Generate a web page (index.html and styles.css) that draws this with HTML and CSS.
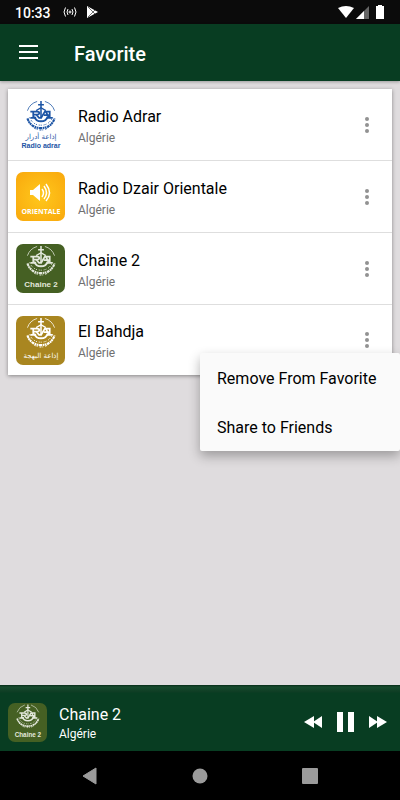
FILE: index.html
```
<!DOCTYPE html>
<html lang="en">
<head>
  <meta charset="UTF-8">
  <meta name="viewport" content="width=device-width, initial-scale=1.0">
  <title>Favorite</title>
  <link rel="stylesheet" href="styles.css">
</head>
<body class="app">

<svg class="sprite" aria-hidden="true">
  <symbol id="emblem" viewBox="0 0 34 32">
    <g fill="none" stroke="currentColor">
      <path d="M3 11A15 15 0 0 1 13 1.500" stroke-width=".8"/>
      <path d="M21 1.500A15 15 0 0 1 31 11" stroke-width=".8"/>
      <path d="M17 1V18M14 5H20" stroke-width="1.600"/>
      <path d="M10 17C11 20 13 22 17 22C21 22 23 20 24 17" stroke-width="2"/>
      <path d="M12 11L17 8L22 11" stroke-width="1.400"/>
      <path d="M6 12H13C16 12 16 15 13 15H9M9 12V18M6 18.500H12M12 15L15 18.500H18M17 18.500L21 12H26V18.500M20 15.500H26M23 18.500H29M22 12L25 18" stroke-width="1.800"/>
      <path d="M3 19C5 25 10 29 17 29C24 29 29 25 31 19" stroke-width="2.200" stroke-dasharray="3 .6 1.500 .5 2 .6"/>
      <path d="M4 22C7 28 12 31 17 31C22 31 27 28 30 22" stroke-width="1" stroke-dasharray="1 2 2 1"/>
      <path d="M5 18C8 24 12 26 17 26C22 26 26 24 29 18" stroke-width="1" stroke-dasharray="1 2 1 1"/>
    </g>
  </symbol>
  <symbol id="dots" viewBox="0 0 4 16">
    <circle cx="2" cy="2" r="2"/><circle cx="2" cy="8" r="2"/><circle cx="2" cy="14" r="2"/>
  </symbol>
  <symbol id="forward" viewBox="0 0 18 14">
    <path d="M0 1L9 7L0 13ZM8 1L18 7L8 13Z"/>
  </symbol>
</svg>

<div class="status">
  <span class="status-time">10:33</span>
  <svg class="status-cast" width="14" height="10" viewBox="0 0 14 10" fill="none" stroke="#fff">
    <circle cx="7" cy="5" r="1"/>
    <path d="M5 2Q3 5 5 8M9 2Q11 5 9 8M2.500 .5Q-.5 5 2.500 9.500M11.500 .5Q14.500 5 11.500 9.500"/>
  </svg>
  <svg class="status-play" width="13" height="12" viewBox="0 0 13 12">
    <path d="M1 0L12 6L1 12Z" fill="#fff"/>
    <path d="M2 1L9 8M2 11L9 4" stroke="#0b0b0b" stroke-width=".6"/>
  </svg>
  <svg class="status-right" width="47" height="14" viewBox="0 0 47 14" fill="#fff">
    <path d="M0 3Q8 -1 16 3L8 13Z"/>
    <path d="M18 14L31 1V14Z" fill="#666"/>
    <path d="M18 14L26 6V14Z"/>
    <path d="M38 1H40V0H44V1H46V14H38Z"/>
  </svg>
</div>

<header class="toolbar">
  <button class="icon-btn" type="button" aria-label="Menu">
    <svg width="19" height="14" viewBox="0 0 19 14" fill="#fff">
      <path d="M0 0H19V2H0ZM0 6H19V8H0ZM0 12H19V14H0Z"/>
    </svg>
  </button>
  <h1 class="toolbar-title">Favorite</h1>
</header>

<main class="content">
  <ul class="stations">
    <li class="station">
      <svg class="cover cover-blue" viewBox="0 0 49 49">
        <use href="#emblem" x="8" y="0" width="34" height="31"/>
        <text class="cover-arabic" x="25" y="39">إذاعة أدرار</text>
        <text class="cover-name" x="25" y="48">Radio adrar</text>
      </svg>
      <div class="station-text">
        <h2 class="station-name">Radio Adrar</h2>
        <p class="station-country">Algérie</p>
      </div>
      <button class="icon-btn more" type="button" aria-label="Options"><svg width="4" height="16"><use href="#dots"/></svg></button>
    </li>
    <li class="station">
      <svg class="cover cover-yellow" viewBox="0 0 49 49">
        <path d="M14 18H17L24 12V29L17 23H14Z"/>
        <path d="M26 17Q29 21 26 25M28 14Q33 21 28 27M30 12Q37 21 30 29" fill="none" stroke="#fff" stroke-width="1.500"/>
        <text class="cover-orientale" x="25" y="42">ORIENTALE</text>
      </svg>
      <div class="station-text">
        <h2 class="station-name">Radio Dzair Orientale</h2>
        <p class="station-country">Algérie</p>
      </div>
      <button class="icon-btn more" type="button" aria-label="Options"><svg width="4" height="16"><use href="#dots"/></svg></button>
    </li>
    <li class="station">
      <svg class="cover cover-green" viewBox="0 0 49 49">
        <use href="#emblem" x="8" y="1" width="34" height="31"/>
        <text class="cover-label" x="25" y="43">Chaine 2</text>
      </svg>
      <div class="station-text">
        <h2 class="station-name">Chaine 2</h2>
        <p class="station-country">Algérie</p>
      </div>
      <button class="icon-btn more" type="button" aria-label="Options"><svg width="4" height="16"><use href="#dots"/></svg></button>
    </li>
    <li class="station">
      <svg class="cover cover-gold" viewBox="0 0 49 49">
        <use href="#emblem" x="8" y="1" width="34" height="31"/>
        <text class="cover-arabic" x="25" y="42">إذاعة البهجة</text>
      </svg>
      <div class="station-text">
        <h2 class="station-name">El Bahdja</h2>
        <p class="station-country">Algérie</p>
      </div>
      <button class="icon-btn more" type="button" aria-label="Options"><svg width="4" height="16"><use href="#dots"/></svg></button>
      <div class="menu">
        <button class="menu-item" type="button">Remove From Favorite</button>
        <button class="menu-item" type="button">Share to Friends</button>
      </div>
    </li>
  </ul>
</main>

<footer class="player">
  <svg class="cover cover-green cover-small" viewBox="0 0 49 49">
    <use href="#emblem" x="8" y="1" width="34" height="31"/>
    <text class="cover-label" x="25" y="43">Chaine 2</text>
  </svg>
  <div class="player-text">
    <p class="player-name">Chaine 2</p>
    <p class="player-country">Algérie</p>
  </div>
  <div class="controls">
    <button class="icon-btn" type="button" aria-label="Previous"><svg class="flip" width="18" height="14"><use href="#forward"/></svg></button>
    <button class="icon-btn" type="button" aria-label="Pause">
      <svg width="17" height="20" viewBox="0 0 17 20"><path d="M0 0H6V20H0ZM11 0H17V20H11Z"/></svg>
    </button>
    <button class="icon-btn" type="button" aria-label="Next"><svg width="18" height="14"><use href="#forward"/></svg></button>
  </div>
</footer>

<nav class="navbar">
  <button class="icon-btn" type="button" aria-label="Back">
    <svg width="16" height="18" viewBox="0 0 16 18"><path d="M14 1V17L1 9Z" stroke="#9b9b9b" stroke-linejoin="round"/></svg>
  </button>
  <button class="icon-btn" type="button" aria-label="Home">
    <svg width="16" height="16" viewBox="0 0 16 16"><circle cx="8" cy="8" r="7.500"/></svg>
  </button>
  <button class="icon-btn" type="button" aria-label="Recent apps">
    <svg width="16" height="16" viewBox="0 0 16 16"><rect width="16" height="16" rx="1"/></svg>
  </button>
</nav>

</body>
</html>
```
FILE: styles.css
```
/* base */
* {
  box-sizing: border-box;
}

.app {
  display: flex;
  flex-direction: column;
  min-height: 100vh;
  margin: 0;
  font-family: Roboto, sans-serif;
  background: #dfdcde;
  color: #000;
}

.sprite {
  position: absolute;
  width: 0;
  height: 0;
}

h1, h2, p {
  margin: 0;
}

.icon-btn {
  display: grid;
  place-items: center;
  padding: 0;
  border: 0;
  background: none;
}

/* status bar */
.status {
  display: flex;
  align-items: center;
  height: 24px;
  padding: 0 15px;
  background: #0b0b0b;
  color: #fff;
}

.status-time {
  padding-top: 2px;
  font-size: 14px;
  font-weight: 500;
}

.status-cast {
  margin-left: 12px;
}

.status-play {
  margin-left: 9px;
}

.status-right {
  margin-left: auto;
}

/* toolbar */
.toolbar {
  display: flex;
  align-items: center;
  gap: 36px;
  height: 57px;
  padding: 3px 19px 0 19px;
  background: #083d22;
  color: #fff;
  box-shadow: 0 1px 3px rgba(0, 0, 0, .3);
}

.toolbar .icon-btn {
  width: 19px;
  height: 32px;
  padding-bottom: 4px;
}

.toolbar-title {
  font-size: 20px;
  font-weight: 500;
}

/* list */
.content {
  flex: 1;
  padding: 8px;
}

.stations {
  margin: 0;
  padding: 0;
  list-style: none;
  background: #fff;
  box-shadow: 0 1px 4px rgba(0, 0, 0, .4);
}

.station {
  position: relative;
  display: flex;
  align-items: center;
  gap: 13px;
  height: 72px;
  padding: 0 8px;
  border-bottom: 1px solid #dedede;
}

.station:last-child {
  height: 70px;
  border-bottom: 0;
}

.station-text {
  flex: 1;
  padding-top: 4px;
}

.station-name {
  font-size: 16px;
  line-height: 22px;
  font-weight: 400;
}

.station-country {
  font-size: 12px;
  line-height: 20px;
  color: #707070;
}

.more {
  width: 34px;
  height: 40px;
  fill: #929292;
}

/* covers */
.cover {
  flex: none;
  width: 49px;
  height: 49px;
  border-radius: 7px;
  color: #fff;
  fill: currentColor;
  text-anchor: middle;
}

.cover-blue {
  color: #1d55a5;
}

.cover-yellow {
  background: radial-gradient(#ffc81c, #f9a80d);
}

.cover-green {
  background: #456023;
  color: #e3e8dc;
}

.cover-gold {
  background: #a98620;
}

.cover-small {
  width: 39px;
  height: 39px;
}

.cover-name {
  font: bold 7px "Liberation Sans", sans-serif;
}

.cover-label {
  font: bold 8px "Liberation Sans", sans-serif;
}

.cover-arabic {
  font: 7px "DejaVu Sans", sans-serif;
}

.cover-orientale {
  font: bold 7px "Open Sans", sans-serif;
}

/* popup menu */
.menu {
  position: absolute;
  z-index: 1;
  top: 48px;
  right: -8px;
  width: 200px;
  border-radius: 2px;
  background: #fafafa;
  box-shadow: 0 5px 12px rgba(0, 0, 0, .3);
}

.menu-item {
  display: block;
  width: 100%;
  height: 49px;
  padding: 2px 17px 0;
  border: 0;
  background: none;
  color: #000;
  font: 16px Roboto, sans-serif;
  text-align: left;
  white-space: nowrap;
}

/* player */
.player {
  display: flex;
  align-items: center;
  height: 66px;
  padding: 8px 13px 0 8px;
  background: linear-gradient(#062c18, #164a2d 2px, #0e3d24 7px, #083d22 8px);
  color: #fff;
}

.player-text {
  flex: 1;
  margin-left: 12px;
  padding-top: 4px;
}

.player-name {
  font-size: 16px;
  line-height: 20px;
}

.player-country {
  font-size: 12px;
  line-height: 18px;
}

.controls {
  display: flex;
  align-items: center;
  gap: 15px;
  fill: #fff;
}

.flip {
  transform: scaleX(-1);
}

/* system navigation */
.navbar {
  display: flex;
  align-items: center;
  justify-content: center;
  gap: 94px;
  height: 49px;
  background: #000;
  fill: #9b9b9b;
}
```
